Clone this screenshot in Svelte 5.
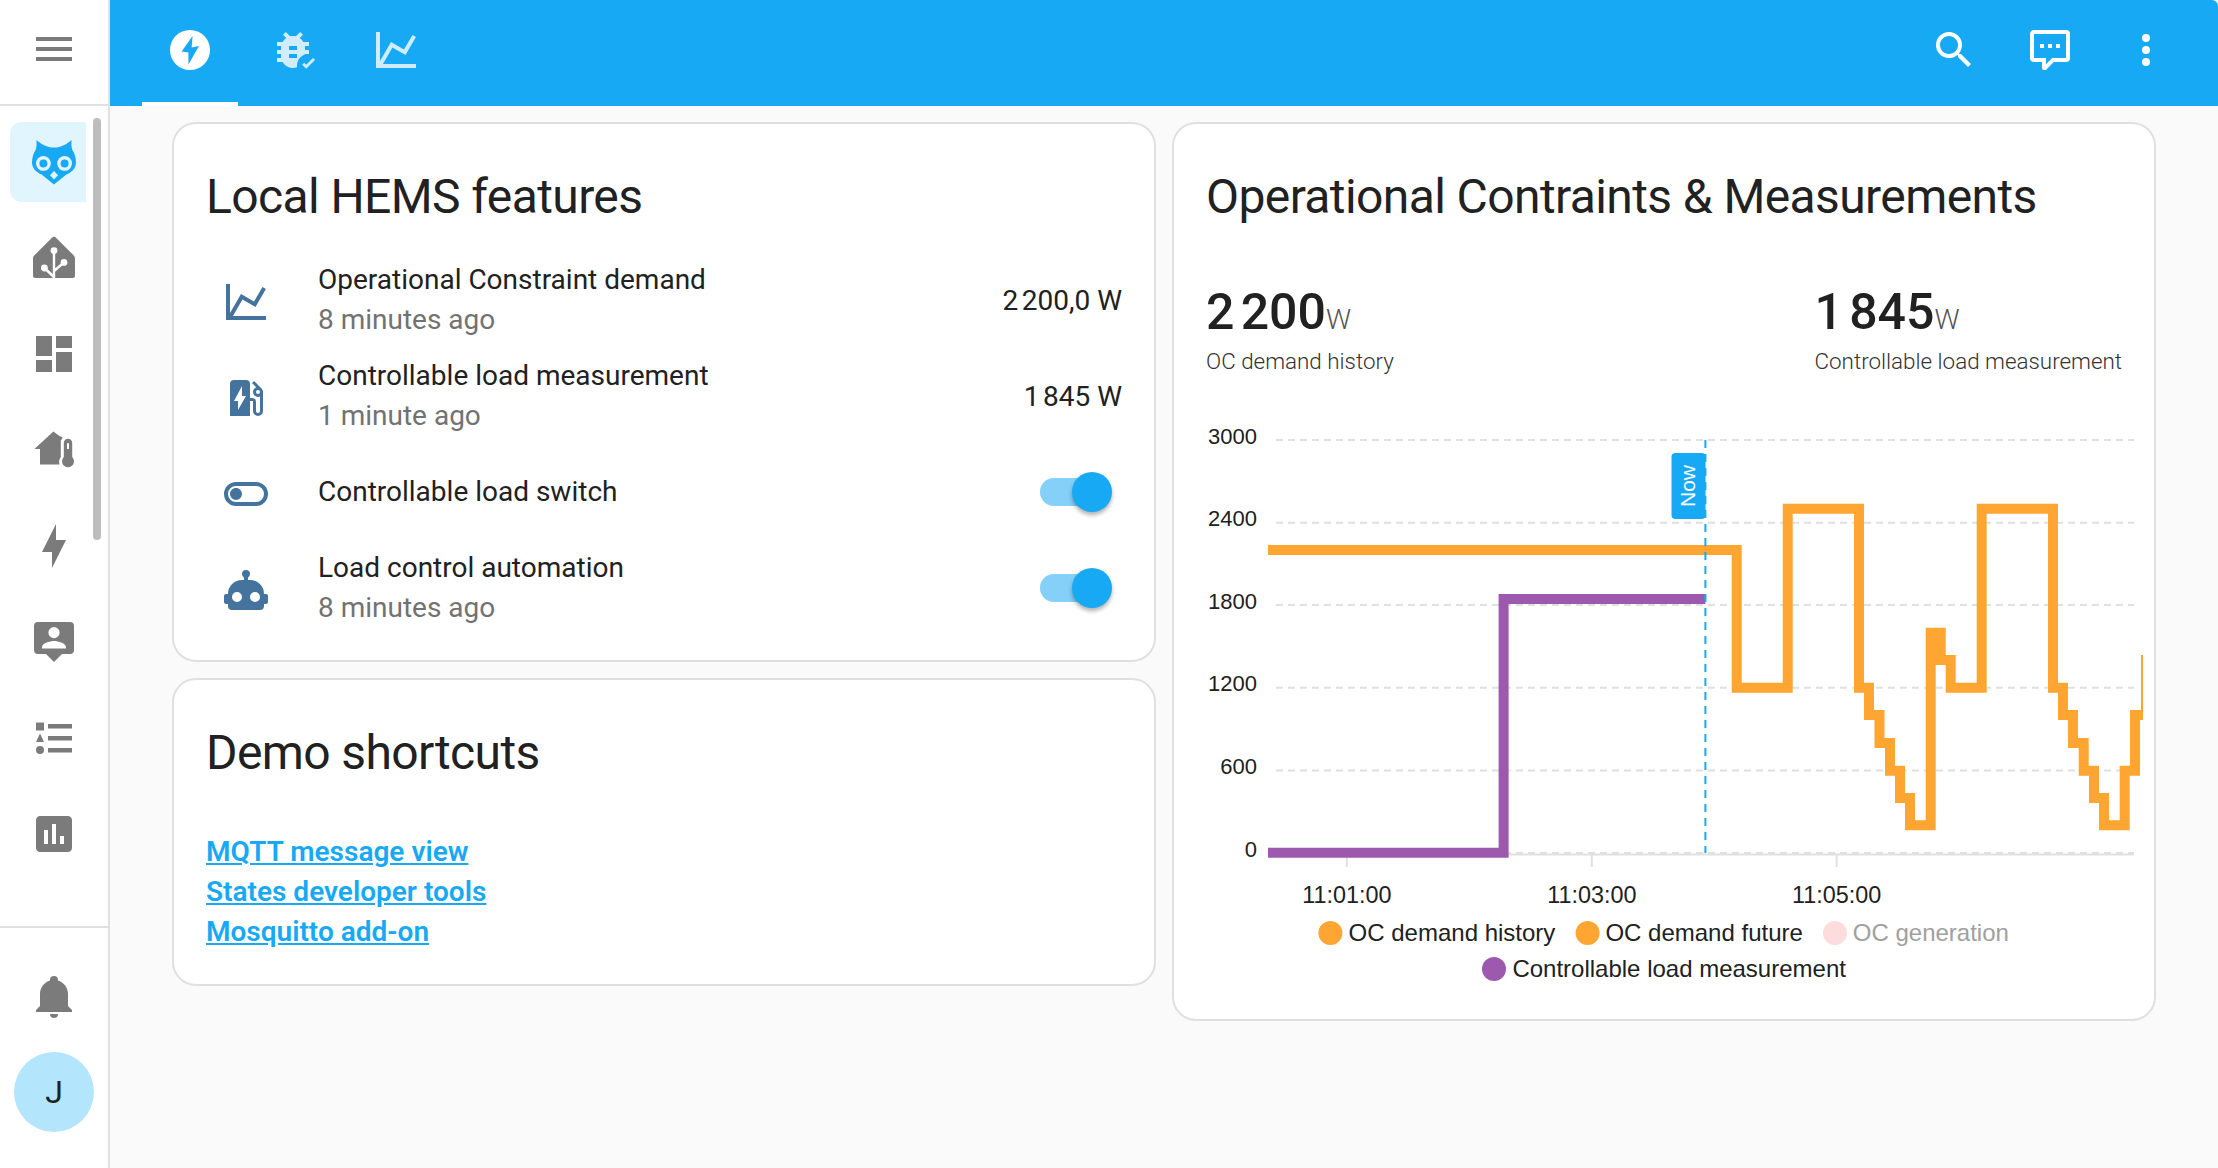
<script lang="ts">
  const icons = {
    menu: "M3,6H21V8H3V6M3,11H21V13H3V11M3,16H21V18H3V16Z",
    owl: "M3.2,1C5.5,3 8.5,4.8 12,4.8C15.5,4.8 18.5,3 20.8,1C20.6,3 20.7,4.6 21.2,6C22.4,7.8 23,10 23,12.3C23,15.2 20.8,17.3 18.2,18.3L12,23.2L5.8,18.3C3.2,17.3 1,15.2 1,12.3C1,10 1.6,7.8 2.8,6C3.3,4.6 3.4,3 3.2,1Z",
    homeAssistant: "M12,1.4C12.4,1.4 12.7,1.6 13,1.9L21.9,10.8C22.2,11.1 22.5,11.7 22.5,12.2V21C22.5,21.6 22,22 21.5,22H2.5C2,22 1.5,21.6 1.5,21V12.2C1.5,11.7 1.8,11.1 2.1,10.8L11,1.9C11.3,1.6 11.6,1.4 12,1.4Z",
    dashboard: "M13,3V9H21V3M13,21H21V11H13M3,21H11V15H3M3,13H11V3H3V13Z",
    home: "M11.7,2.7L2.2,11.5H5V19.3H14.9C14.4,18.6 14.5,16.5 15.4,15.6V7.2L16.4,5.9L14.2,4.6Z",
    thermo: "M16.9,8.5A2.1,2.1 0 0,1 21.1,8.5V15.5A3,3 0 1,1 16.9,15.5ZM18.5,9V11.5H19.5V9A0.5,0.5 0 0,0 18.5,9Z",
    bolt: "M11 15H6L13 1V9H18L11 23V15Z",
    person: "M4,2H20A2,2 0 0 1 22,4V16A2,2 0 0 1 20,18H16L12,22L8,18H4A2,2 0 0 1 2,16V4A2,2 0 0 1 4,2ZM12,4.5A2.8,2.8 0 1,0 12,10.1A2.8,2.8 0 1,0 12,4.5ZM6,15.3V14.6C6,12.6 10,11.5 12,11.5C14,11.5 18,12.6 18,14.6V15.3Z",
    list: "M3,4.2H7V8.2H3ZM5,9.8L7,14H3ZM5,16A2,2 0 1,1 5,20A2,2 0 1,1 5,16ZM9,5H21V7.2H9ZM9,11H21V13.2H9ZM9,17H21V19.2H9Z",
    chartBox: "M19,3H5C3.9,3 3,3.9 3,5V19C3,20.1 3.9,21 5,21H19C20.1,21 21,20.1 21,19V5C21,3.9 20.1,3 19,3M9,17H7V10H9V17M13,17H11V7H13V17M17,17H15V13H17V17Z",
    bell: "M21,19V20H3V19L5,17V11C5,7.9 7.03,5.17 10,4.29C10,4.19 10,4.1 10,4A2,2 0 0,1 12,2A2,2 0 0,1 14,4C14,4.1 14,4.19 14,4.29C16.97,5.17 19,7.9 19,11V17L21,19M14,21A2,2 0 0,1 12,23A2,2 0 0,1 10,21",
    flashCircle: "M12,2A10,10 0 1,0 12,22A10,10 0 1,0 12,2ZM13.3,5L7.8,12.8L11.2,13.3V19.3L16.5,10L12.8,10.8Z",
    bugCheck: "M14,12H10V10H14ZM14,16H10V14H14ZM20,8H17.19C16.74,7.22 16.12,6.55 15.37,6.04L17,4.41L15.59,3L13.42,5.17C12.96,5.06 12.5,5 12,5C11.5,5 11.04,5.06 10.59,5.17L8.41,3L7,4.41L8.62,6.04C7.88,6.55 7.26,7.22 6.81,8H4V10H6.09C6.04,10.33 6,10.66 6,11V12H4V14H6V15C6,15.34 6.04,15.67 6.09,16H4V18H6.81C7.85,19.79 9.78,21 12,21C12.71,21 13.39,20.88 14,20.65C14,18.6 14,16 18,14.1V14H20V12H18V11C18,10.66 17.96,10.33 17.91,10H20V8Z",
    check: "M16.6,19.4L18.6,21.4L23,17L22,16L18.6,19.4L17.6,18.4Z",
    chartLine: "M16,11.78L20.24,4.45L21.97,5.45L16.74,14.5L10.23,10.75L5.46,19H22V21H2V3H4V17.54L9.5,8L16,11.78Z",
    search: "M9.5,3A6.5,6.5 0 0,1 16,9.5C16,11.11 15.41,12.59 14.44,13.73L14.71,14H15.5L20.5,19L19,20.5L14,15.5V14.71L13.73,14.44C12.59,15.41 11.11,16 9.5,16A6.5,6.5 0 0,1 3,9.5A6.5,6.5 0 0,1 9.5,3M9.5,5C7,5 5,7 5,9.5C5,12 7,14 9.5,14C12,14 14,12 14,9.5C14,7 12,5 9.5,5Z",
    comment: "M9,22A1,1 0 0,1 8,21V18H4A2,2 0 0,1 2,16V4C2,2.89 2.9,2 4,2H20A2,2 0 0,1 22,4V16A2,2 0 0,1 20,18H13.9L10.2,21.71C10,21.9 9.75,22 9.5,22V22H9M10,16V19.08L13.08,16H20V4H4V16H10M17,11H15V9H17V11M13,11H11V9H13V11M9,11H7V9H9V11Z",
    dots: "M12,16A2,2 0 0,1 14,18A2,2 0 0,1 12,20A2,2 0 0,1 10,18A2,2 0 0,1 12,16M12,10A2,2 0 0,1 14,12A2,2 0 0,1 12,14A2,2 0 0,1 10,12A2,2 0 0,1 12,10M12,4A2,2 0 0,1 14,6A2,2 0 0,1 12,8A2,2 0 0,1 10,6A2,2 0 0,1 12,4Z",
    evStation: "M19.77,7.23L19.78,7.22L16.06,3.5L15,4.56L17.11,6.67C16.17,7.03 15.5,7.93 15.5,9A2.5,2.5 0 0,0 18,11.5C18.36,11.5 18.69,11.42 19,11.29V18.5A1,1 0 0,1 18,19.5A1,1 0 0,1 17,18.5V14A2,2 0 0,0 15,12H14V5A2,2 0 0,0 12,3H6A2,2 0 0,0 4,5V21H14V13.5H15.5V18.5A2.5,2.5 0 0,0 18,21A2.5,2.5 0 0,0 20.5,18.5V9C20.5,8.31 20.22,7.68 19.77,7.23M18,10A1,1 0 0,1 17,9A1,1 0 0,1 18,8A1,1 0 0,1 19,9A1,1 0 0,1 18,10M8,18V13.5H6L10,6V11H12L8,18Z",
    toggleOff: "M7,15A3,3 0 0,1 4,12C4,10.34 5.34,9 7,9C8.66,9 10,10.34 10,12A3,3 0 0,1 7,15M17,6H7A6,6 0 0,0 1,12A6,6 0 0,0 7,18H17A6,6 0 0,0 23,12A6,6 0 0,0 17,6M17,16H7A4,4 0 0,1 3,12A4,4 0 0,1 7,8H17A4,4 0 0,1 21,12A4,4 0 0,1 17,16Z",
    robot: "M12,2A2,2 0 0,1 14,4C14,4.74 13.6,5.39 13,5.73V7H14A7,7 0 0,1 21,14H22A1,1 0 0,1 23,15V18A1,1 0 0,1 22,19H21V20A2,2 0 0,1 19,22H5A2,2 0 0,1 3,20V19H2A1,1 0 0,1 1,18V15A1,1 0 0,1 2,14H3A7,7 0 0,1 10,7H11V5.73C10.4,5.39 10,4.74 10,4A2,2 0 0,1 12,2M7.5,13A2.5,2.5 0 0,0 5,15.5A2.5,2.5 0 0,0 7.5,18A2.5,2.5 0 0,0 10,15.5A2.5,2.5 0 0,0 7.5,13M16.5,13A2.5,2.5 0 0,0 14,15.5A2.5,2.5 0 0,0 16.5,18A2.5,2.5 0 0,0 19,15.5A2.5,2.5 0 0,0 16.5,13Z"
  };

  const navTop = [icons.homeAssistant, icons.dashboard, null, icons.bolt, icons.person, icons.list, icons.chartBox];

  const rows = [
    { icon: icons.chartLine, name: "Operational Constraint demand", time: "8 minutes ago", value: "2\u202f200,0 W" },
    { icon: icons.evStation, name: "Controllable load measurement", time: "1 minute ago", value: "1\u202f845 W" },
    { icon: icons.toggleOff, name: "Controllable load switch", toggle: true },
    { icon: icons.robot, name: "Load control automation", time: "8 minutes ago", toggle: true }
  ];

  const links = ["MQTT message view", "States developer tools", "Mosquitto add-on"];

  // chart geometry, in page pixels
  const levels = [
    { label: "3000", y: 440 },
    { label: "2400", y: 522.7 },
    { label: "1800", y: 605 },
    { label: "1200", y: 687.7 },
    { label: "600", y: 770.4 },
    { label: "0", y: 853 }
  ];
  const ticks = [
    { x: 1346.8, label: "11:01:00" },
    { x: 1591.8, label: "11:03:00" },
    { x: 1836.7, label: "11:05:00" }
  ];

  // x, y pairs: a step line goes across to x, then up or down to y
  const steps = [
    [1736.7, 687.7], [1787.7, 508.7], [1859, 687.7], [1869, 715], [1879.5, 743], [1890, 770.7],
    [1900, 798], [1910, 825.3], [1930.7, 632.7], [1940.7, 660], [1950.7, 687.7], [1981.7, 508.7],
    [2053, 687.7], [2063, 715], [2073, 743], [2083.7, 770.7], [2094, 798], [2104, 825.3],
    [2124.7, 770.7], [2135, 715], [2146, 655]
  ];
  const orange = "M1268,550" + steps.map(([x, y]) => `H${x}V${y}`).join("");
  const purple = "M1268,852.7H1503.6V599H1705.4";

  const legend = [
    { x: 1330.4, y: 933, tx: 1348.6, color: "#ffa632", label: "OC demand history" },
    { x: 1587.6, y: 933, tx: 1605.4, color: "#ffa632", label: "OC demand future" },
    { x: 1835, y: 933, tx: 1852.8, color: "#fcdcdc", label: "OC generation", off: true },
    { x: 1494, y: 969, tx: 1512.4, color: "#9c59ad", label: "Controllable load measurement" }
  ];
</script>

<div class="page">
  <aside class="sidebar">
    <div class="side-top">
      <svg class="icon" viewBox="0 0 24 24"><path d={icons.menu} /></svg>
    </div>
    <div class="side-list">
      <div class="side-item selected">
        <svg class="icon owl" viewBox="0 0 24 24">
          <path d={icons.owl} />
          <circle cx="6.7" cy="12.7" r="3.7" fill="#e1f5fe" />
          <circle cx="17.3" cy="12.7" r="3.7" fill="#e1f5fe" />
          <circle cx="6.7" cy="12.7" r="2" />
          <circle cx="17.3" cy="12.7" r="2" />
          <path d="M12,16.5L14,18.6L12,20.7L10,18.6Z" fill="#e1f5fe" />
        </svg>
      </div>
      {#each navTop as d, i}
        <div class="side-item">
          <svg class="icon" viewBox="0 0 24 24">
            {#if d}
              <path {d} fill-rule="evenodd" />
              {#if i === 0}
                <g class="tree">
                  <path d="M12,22V8.3M12,18.5L17,14.2M12,21.5L7.2,17" />
                  <circle cx="12" cy="8.3" r="1.7" />
                  <circle cx="17" cy="14.2" r="1.7" />
                  <circle cx="7.2" cy="17" r="1.7" />
                </g>
              {/if}
            {:else}
              <path d={icons.home} />
              <path d={icons.thermo} fill-rule="evenodd" />
            {/if}
          </svg>
        </div>
      {/each}
      <div class="scrollbar"></div>
    </div>
    <div class="side-bottom">
      <div class="bell">
        <svg class="icon" viewBox="0 0 24 24"><path d={icons.bell} /></svg>
      </div>
      <div class="avatar">J</div>
    </div>
  </aside>

  <div class="main">
    <header class="topbar">
      <nav class="tabs">
        <div class="tab active">
          <svg class="icon" viewBox="0 0 24 24"><path d={icons.flashCircle} fill-rule="evenodd" /></svg>
        </div>
        <div class="tab">
          <svg class="icon" viewBox="0 0 24 24"><path d={icons.bugCheck} /><path d={icons.check} /></svg>
        </div>
        <div class="tab">
          <svg class="icon" viewBox="0 0 24 24"><path d={icons.chartLine} /></svg>
        </div>
      </nav>
      <div class="actions">
        <svg class="icon" viewBox="0 0 24 24"><path d={icons.search} /></svg>
        <svg class="icon" viewBox="0 0 24 24"><path d={icons.comment} /></svg>
        <svg class="icon" viewBox="0 0 24 24"><path d={icons.dots} /></svg>
      </div>
    </header>

    <main class="content">
      <div class="column">
        <section class="card">
          <h1>Local HEMS features</h1>
          <div class="rows">
            {#each rows as row}
              <div class="row">
                <svg class="icon row-icon" viewBox="0 0 24 24"><path d={row.icon} /></svg>
                <div class="row-text">
                  <div class="name">{row.name}</div>
                  {#if row.time}<div class="time">{row.time}</div>{/if}
                </div>
                {#if row.toggle}
                  <div class="switch"><div class="track"></div><div class="thumb"></div></div>
                {:else}
                  <div class="value">{row.value}</div>
                {/if}
              </div>
            {/each}
          </div>
        </section>

        <section class="card">
          <h1>Demo shortcuts</h1>
          <div class="links">
            {#each links as link}
              <div><a href="#top">{link}</a></div>
            {/each}
          </div>
        </section>
      </div>

      <div class="column">
        <section class="card">
          <h1>Operational Contraints &amp; Measurements</h1>
          <div class="stats">
            <div>
              <div class="stat"><span class="num">2&#8239;200</span><span class="unit">W</span></div>
              <div class="stat-name">OC demand history</div>
            </div>
            <div>
              <div class="stat"><span class="num">1&#8239;845</span><span class="unit">W</span></div>
              <div class="stat-name">Controllable load measurement</div>
            </div>
          </div>

          <svg class="chart" viewBox="1174 420 980 580" width="980" height="580">
            <defs>
              <clipPath id="plot"><rect x="1174" y="420" width="969" height="580" /></clipPath>
            </defs>
            {#each levels as l}
              <line class="grid" x1="1276" x2="2134" y1={l.y} y2={l.y} />
              <text class="ylabel" x="1257" y={l.y + 3.5}>{l.label}</text>
            {/each}
            <line class="axis" x1="1276" x2="2134" y1="854.5" y2="854.5" />
            {#each ticks as t}
              <line class="axis" x1={t.x} x2={t.x} y1="855" y2="867" />
              <text class="xlabel" x={t.x} y="903">{t.label}</text>
            {/each}
            <g clip-path="url(#plot)">
              <path class="series" d={orange} stroke="#ffa632" />
              <path class="series" d={purple} stroke="#9c59ad" />
            </g>
            <rect x="1671.5" y="453" width="34" height="66" rx="4" fill="#17a9f4" />
            <text class="now" transform="translate(1695 486) rotate(-90)">Now</text>
            <line class="now-line" x1="1705.4" x2="1705.4" y1="440" y2="853" />
            {#each legend as item}
              <circle cx={item.x} cy={item.y} r="12" fill={item.color} />
              <text class="legend" class:off={item.off} x={item.tx} y={item.y + 8}>{item.label}</text>
            {/each}
          </svg>
        </section>
      </div>
    </main>
  </div>
</div>

<style>
  :global(body) {
    margin: 0;
    background: #fff;
  }

  .page {
    display: flex;
    width: 2218px;
    height: 1168px;
    overflow: hidden;
    font-family: Roboto, sans-serif;
    color: #212121;
  }

  .icon {
    display: block;
    width: 48px;
    height: 48px;
    fill: currentColor;
    flex: none;
  }

  /* sidebar */
  .sidebar {
    width: 110px;
    flex: none;
    box-sizing: border-box;
    display: flex;
    flex-direction: column;
    border-right: 2px solid #e0e0e0;
    background: #fff;
    color: #7b7b7b;
  }

  .side-top {
    height: 106px;
    flex: none;
    box-sizing: border-box;
    padding-bottom: 6px;
    display: flex;
    align-items: center;
    justify-content: center;
    border-bottom: 2px solid #e0e0e0;
  }

  .side-list {
    position: relative;
    flex: 1;
    padding-top: 8px;
  }

  .side-item {
    height: 96px;
    display: flex;
    align-items: center;
    justify-content: center;
  }

  .side-item.selected {
    position: relative;
    color: #17a9f4;
  }

  .side-item.selected::before {
    content: "";
    position: absolute;
    left: 10px;
    top: 8px;
    width: 76px;
    height: 80px;
    border-radius: 12px 0 0 12px;
    background: #e1f5fe;
  }

  .owl {
    position: relative;
  }

  .tree path {
    fill: none;
    stroke: #fff;
    stroke-width: 1.2;
  }

  .tree circle {
    fill: #fff;
  }

  .scrollbar {
    position: absolute;
    left: 93px;
    top: 12px;
    width: 8px;
    height: 422px;
    border-radius: 4px;
    background: #bdbdbd;
  }

  .side-bottom {
    height: 242px;
    flex: none;
    box-sizing: border-box;
    border-top: 2px solid #e0e0e0;
  }

  .bell {
    height: 112px;
    padding-top: 12px;
    display: flex;
    align-items: center;
    justify-content: center;
  }

  .avatar {
    width: 80px;
    height: 80px;
    margin: 0 auto;
    border-radius: 50%;
    background: #b3e5fc;
    color: #212121;
    font-size: 32px;
    line-height: 80px;
    text-align: center;
  }

  /* header */
  .main {
    flex: 1;
    display: flex;
    flex-direction: column;
    background: #fafafa;
  }

  .topbar {
    height: 106px;
    flex: none;
    display: flex;
    justify-content: space-between;
    padding: 0 48px 0 32px;
    background: #17a9f4;
    color: #fff;
    border-top-right-radius: 6px;
  }

  .tabs {
    display: flex;
  }

  .tab {
    position: relative;
    width: 96px;
    padding-top: 26px;
    box-sizing: border-box;
    display: flex;
    justify-content: center;
    margin-right: 7px;
    color: #d1edfd;
  }

  .tab.active {
    color: #fff;
    border-bottom: 4px solid #fff;
  }

  .actions {
    display: flex;
    gap: 48px;
    padding-top: 26px;
    margin-right: 0;
  }

  /* cards */
  .content {
    display: grid;
    grid-template-columns: 984px 984px;
    gap: 16px;
    padding: 16px 62px;
    align-items: start;
  }

  .column {
    display: flex;
    flex-direction: column;
    gap: 16px;
  }

  .card {
    box-sizing: border-box;
    border: 2px solid #e0e0e0;
    border-radius: 24px;
    background: #fff;
  }

  h1 {
    margin: 0;
    padding: 41px 32px 23px;
    font-size: 48px;
    font-weight: 400;
    line-height: 64px;
    letter-spacing: -0.6px;
  }

  .rows {
    padding-bottom: 24px;
  }

  .row {
    height: 96px;
    display: flex;
    align-items: center;
    padding: 0 32px 0 48px;
  }

  .row-icon {
    color: #44739e;
    margin-top: 4px;
    margin-right: 48px;
  }

  .row-text {
    flex: 1;
    font-size: 28px;
    line-height: 40px;
  }

  .time {
    color: #727272;
  }

  .value {
    font-size: 28px;
  }

  .switch {
    position: relative;
    width: 72px;
    height: 40px;
    margin-right: 10px;
  }

  .track {
    position: absolute;
    left: 0;
    top: 6px;
    width: 68px;
    height: 28px;
    border-radius: 14px;
    background: #84d0f8;
  }

  .thumb {
    position: absolute;
    right: 0;
    top: 0;
    width: 40px;
    height: 40px;
    border-radius: 50%;
    background: #17a9f4;
    box-shadow: 0 3px 4px rgba(0, 0, 0, 0.3);
  }

  .links {
    padding: 24px 32px 32px;
    font-size: 28px;
    font-weight: 600;
    line-height: 40px;
  }

  .links a {
    color: #17a9f4;
  }

  .stats {
    display: flex;
    justify-content: space-between;
    padding: 30px 32px 0;
  }

  .stat {
    height: 60px;
    line-height: 60px;
    white-space: nowrap;
  }

  .num {
    font-size: 50px;
    font-weight: 500;
  }

  .unit {
    font-size: 28px;
    font-weight: 300;
    color: #555;
  }

  .stat-name {
    margin-top: 3px;
    font-size: 22.4px;
    font-weight: 300;
    line-height: 32px;
    color: #333;
  }

  .chart {
    display: block;
    margin-top: 43px;
    margin-bottom: 19px;
  }

  .chart text {
    font-family: "Liberation Sans", Arial, sans-serif;
    fill: #212121;
  }

  .grid {
    stroke: #e0e0e0;
    stroke-width: 2;
    stroke-dasharray: 7 5;
  }

  .axis {
    stroke: #e0e0e0;
    stroke-width: 2;
  }

  .chart .ylabel {
    font-size: 22px;
    text-anchor: end;
  }

  .chart .xlabel {
    font-size: 23.4px;
    text-anchor: middle;
  }

  .series {
    fill: none;
    stroke-width: 10;
  }

  .chart .now {
    font-size: 21px;
    fill: #fff;
    text-anchor: middle;
  }

  .now-line {
    stroke: #17a9f4;
    stroke-width: 2;
    stroke-dasharray: 8 6;
  }

  .chart .legend {
    font-size: 24px;
  }

  .chart .legend.off {
    fill: #a0a0a0;
  }
</style>
